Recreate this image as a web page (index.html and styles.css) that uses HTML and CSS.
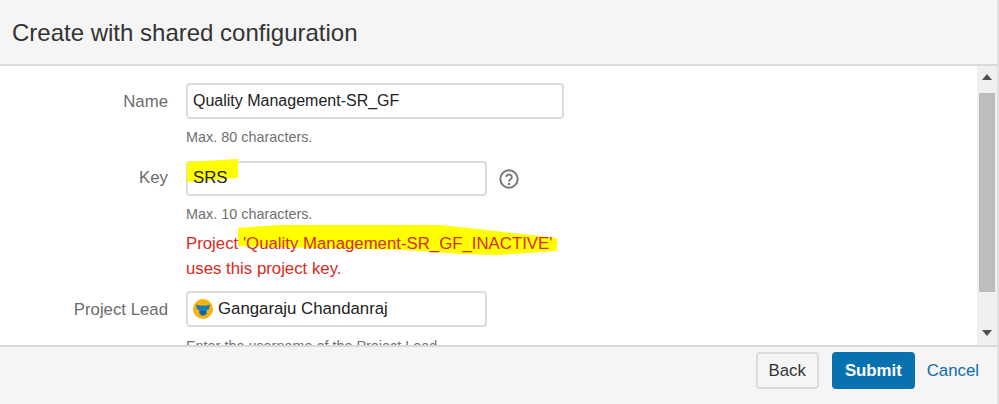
FILE: index.html
```html
<!DOCTYPE html>
<html lang="en">
<head>
  <meta charset="UTF-8" />
  <title>Create with shared configuration</title>
  <link rel="stylesheet" href="styles.css">
</head>
<body>
  <div class="dialog">
    <div class="dialog-header">
      <h2>Create with shared configuration</h2>
    </div>

    <div class="dialog-middle">
      <form class="form">
        <div class="field">
          <label>Name</label>
          <div class="field-main">
            <div class="input input-long">Quality Management-SR_GF</div>
            <div class="hint">Max. 80 characters.</div>
          </div>
        </div>

        <div class="field field-key">
          <label>Key</label>
          <div class="field-main">
            <div class="input-row">
              <div class="input input-short input-key">
                <span class="marker-key"></span>
                <span class="over-marker">SRS</span>
              </div>
              <svg class="help" width="20" height="20" viewBox="0 0 20 20">
                <circle cx="10" cy="10" r="8.7" fill="none" stroke="#777" stroke-width="2"/>
                <path d="M7.200 8a2.800 2.600 0 1 1 4.400 2.200c-1 .7-1.600 1.100-1.600 2.300" fill="none" stroke="#777" stroke-width="1.900"/>
                <circle cx="10" cy="15" r="1.200" fill="#777"/>
              </svg>
            </div>
            <div class="hint">Max. 10 characters.</div>
            <div class="error">
              <span class="marker-project"></span>
              <span class="over-marker">Project 'Quality Management-SR_GF_INACTIVE'<br>uses this project key.</span>
            </div>
          </div>
        </div>

        <div class="field field-lead">
          <label>Project Lead</label>
          <div class="field-main">
            <div class="input input-short input-user">
              <svg class="avatar" width="20" height="20" viewBox="0 0 20 20">
                <circle cx="10" cy="10" r="10" fill="#f6b20f"/>
                <path d="M3 5.500 6.500 6.500h7l3.500-1-1 4.500-2 1-.5 4.300-3.500 1.700-3.500-1.700-.5-4.300-2-1z" fill="#1c7cb8"/>
                <path d="M7.500 12h5l-.7 3-1.800.8-1.800-.8z" fill="#0f5c94"/>
              </svg>
              <span>Gangaraju Chandanraj</span>
            </div>
            <div class="hint hint-lead">Enter the username of the Project Lead.</div>
          </div>
        </div>
      </form>

      <div class="scrollbar">
        <div class="arrow arrow-up"></div>
        <div class="track"><div class="thumb"></div></div>
        <div class="arrow arrow-down"></div>
      </div>
    </div>

    <div class="dialog-footer">
      <button class="btn btn-back" type="button">Back</button>
      <button class="btn btn-primary" type="button">Submit</button>
      <a class="cancel" href="#">Cancel</a>
    </div>
  </div>
</body>
</html>
```

FILE: styles.css
```css
* {
  margin: 0;
  padding: 0;
  box-sizing: border-box;
}
body {
  background: white;
  color: #333;
  font-family: "Liberation Sans", Arial, sans-serif;
  font-size: 16.8px;
}
.dialog {
  width: 999px;
  height: 404px;
  display: flex;
  flex-direction: column;
  overflow: hidden;
  border-right: 2px solid #e0e0e0;
}
.dialog-header {
  height: 66px;
  flex: none;
  background: #f5f5f5;
  border-bottom: 2px solid #d9d9d9;
  padding: 18px 12px 0;
}
.dialog-header h2 {
  font-size: 24px;
  font-weight: normal;
  line-height: 30px;
}
.dialog-middle {
  flex: 1;
  display: flex;
  min-height: 0;
  overflow: hidden;
}
.form {
  flex: 1;
  padding-top: 17px;
  overflow: hidden;
}
.field {
  display: flex;
  align-items: flex-start;
}
.field label {
  width: 186px;
  flex: none;
  padding: 9px 18px 0 0;
  text-align: right;
  color: #6b6b6b;
  line-height: 20px;
}
.field-key {
  margin-top: 15px;
}
.field-key label {
  padding-top: 7px;
}
.field-lead {
  margin-top: 10px;
}
.input {
  position: relative;
  height: 36px;
  background: white;
  border: 2px solid #dcdcdc;
  border-radius: 4px;
  padding: 0 5px;
  color: #222;
  line-height: 32px;
}
.input-long {
  width: 378px;
  font-size: 16px;
}
.input-short {
  width: 301px;
}
.input-key {
  height: 35px;
  line-height: 29px;
}
.input-row {
  display: flex;
  align-items: center;
  gap: 12px;
}
.over-marker {
  position: relative;
}
.input-user {
  display: flex;
  align-items: center;
  gap: 5px;
}
.marker-key {
  position: absolute;
  top: -4px;
  left: -1px;
  width: 52px;
  height: 24px;
  background: #ffff00;
  clip-path: polygon(0 3px, 51px 0, 51px 19px, 0 23px);
}
.hint {
  margin-top: 10px;
  font-size: 14.400px;
  line-height: 17px;
  color: #707070;
}
.hint-lead {
  margin-top: 11px;
}
.error {
  position: relative;
  margin-top: 8px;
  color: #d92a1c;
  line-height: 25px;
}
.marker-project {
  position: absolute;
  top: -7px;
  left: 52px;
  width: 320px;
  height: 33px;
  background: #ffff00;
  clip-path: polygon(0 4px, 42px 1px, 202px 1px, 240px 5px, 319px 14px, 319px 27px, 259px 31px, 222px 30px, 165px 26px, 0 22px);
}
.scrollbar {
  width: 20px;
  flex: none;
  background: #f0f0f0;
  display: flex;
  flex-direction: column;
}
.arrow {
  flex: none;
  display: flex;
  align-items: center;
  justify-content: center;
}
.arrow::before {
  content: "";
  border-left: 5px solid transparent;
  border-right: 5px solid transparent;
}
.arrow-up {
  height: 22px;
}
.arrow-up::before {
  border-bottom: 6px solid #505050;
}
.arrow-down {
  height: 24px;
}
.arrow-down::before {
  border-top: 6px solid #505050;
}
.track {
  flex: 1;
  padding: 5px 2px 0;
}
.thumb {
  height: 199px;
  background: #bdbdbd;
}
.dialog-footer {
  height: 59px;
  flex: none;
  background: #f5f5f5;
  border-top: 2px solid #d9d9d9;
  display: flex;
  justify-content: flex-end;
  align-items: flex-start;
  gap: 13px;
  padding: 5px 18px 0 0;
}
.btn {
  height: 37px;
  padding: 0 11px;
  border: 2px solid #dcdcdc;
  border-radius: 4px;
  background: #f5f5f5;
  color: #333;
  font-family: inherit;
  font-size: 16.8px;
}
.btn-primary {
  background: #0872b0;
  border-color: #0872b0;
  color: white;
  font-weight: bold;
}
.cancel {
  margin-left: -1px;
  color: #0b6cb0;
  text-decoration: none;
  line-height: 37px;
}
```
